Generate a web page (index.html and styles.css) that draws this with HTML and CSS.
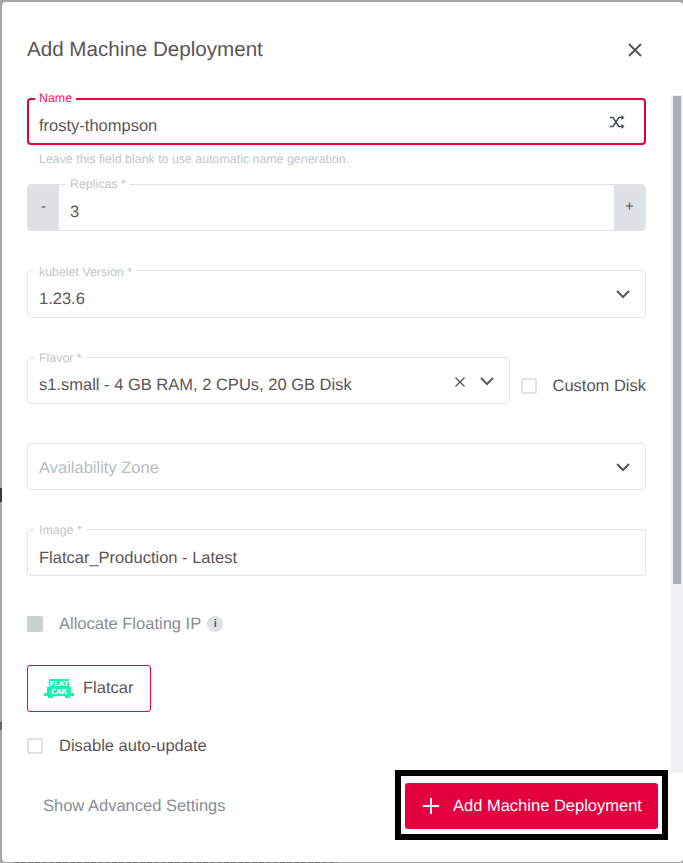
FILE: index.html
```html
<!DOCTYPE html>
<html lang="en">

<head>
    <meta charset="UTF-8">
    <title>Add Machine Deployment</title>
    <link rel="stylesheet" href="styles.css">
</head>

<body>
    <div class="dialog">
        <div class="header">
            <h1>Add Machine Deployment</h1>
            <svg class="close" width="16" height="16" viewBox="0 0 16 16">
                <path d="M2 2L14 14M14 2L2 14" stroke="#5b5557" stroke-width="2" fill="none" />
            </svg>
        </div>

        <div class="scrollbar">
            <div class="thumb"></div>
        </div>

        <div class="form">
            <div class="field active">
                <span class="label">Name</span>
                <span class="value">frosty-thompson</span>
                <svg class="shuffle" width="16" height="16" viewBox="0 0 18 18">
                    <path d="M1 4H4.5L11 14H15M1 14H4.5L11 4H15" stroke="#45525c" stroke-width="1.7" fill="none" />
                    <path d="M14 1L17.5 4L14 7ZM14 11L17.5 14L14 17Z" fill="#45525c" />
                </svg>
            </div>
            <div class="hint">Leave this field blank to use automatic name generation.</div>

            <div class="field replicas">
                <span class="step">-</span>
                <span class="label">Replicas *</span>
                <span class="value">3</span>
                <span class="step plus">+</span>
            </div>

            <div class="field gap tall">
                <span class="label">kubelet Version *</span>
                <span class="value">1.23.6</span>
                <svg class="chevron" width="16" height="10" viewBox="0 0 16 10">
                    <path d="M2 2L8 8L14 2" stroke="#5b5557" stroke-width="2" fill="none" />
                </svg>
            </div>

            <div class="flavor-row">
                <div class="field flavor">
                    <span class="label">Flavor *</span>
                    <span class="value">s1.small - 4 GB RAM, 2 CPUs, 20 GB Disk</span>
                    <svg class="clear" width="12" height="12" viewBox="0 0 12 12">
                        <path d="M1.5 1.5L10.5 10.5M10.5 1.5L1.5 10.5" stroke="#5b5557" stroke-width="1.4" fill="none" />
                    </svg>
                    <svg class="chevron" width="16" height="10" viewBox="0 0 16 10">
                        <path d="M2 2L8 8L14 2" stroke="#5b5557" stroke-width="2" fill="none" />
                    </svg>
                </div>
                <div class="check-wrap">
                    <span class="checkbox"></span>
                    <span class="check-text">Custom Disk</span>
                </div>
            </div>

            <div class="field gap">
                <span class="value placeholder">Availability Zone</span>
                <svg class="chevron" width="16" height="10" viewBox="0 0 16 10">
                    <path d="M2 2L8 8L14 2" stroke="#5b5557" stroke-width="2" fill="none" />
                </svg>
            </div>

            <div class="field gap image">
                <span class="label">Image *</span>
                <span class="value">Flatcar_Production - Latest</span>
            </div>

            <div class="check-row floating">
                <span class="checkbox checked"></span>
                <span class="check-text muted">Allocate Floating IP</span>
                <span class="info">i</span>
            </div>

            <div class="os-button">
                <svg class="logo" width="30" height="20" viewBox="0 0 30 20">
                    <rect x="5" y="0" width="20" height="8" fill="#1af2b0" />
                    <rect x="3" y="8" width="24" height="8" fill="#1af2b0" />
                    <rect x="0" y="14" width="30" height="3" fill="#1af2b0" />
                    <rect x="4" y="17" width="5" height="2" fill="#1af2b0" />
                    <rect x="21" y="17" width="5" height="2" fill="#1af2b0" />
                    <text x="15" y="6.5" class="logo-text">FLAT</text>
                    <text x="15" y="14.5" class="logo-text">CAR</text>
                </svg>
                <span>Flatcar</span>
            </div>

            <div class="check-row update">
                <span class="checkbox"></span>
                <span class="check-text">Disable auto-update</span>
            </div>
        </div>

        <div class="footer">
            <span class="advanced">Show Advanced Settings</span>
            <div class="highlight">
                <div class="submit">
                    <svg width="18" height="18" viewBox="0 0 18 18">
                        <path d="M9 1V17M1 9H17" stroke="#fff" stroke-width="2" fill="none" />
                    </svg>
                    <span>Add Machine Deployment</span>
                </div>
            </div>
        </div>
    </div>
</body>

</html>
```

FILE: styles.css
```css
body {
    margin: 0;
    height: 863px;
    overflow: hidden;
    background-color: #a5a5a5;
    /* bits of the page behind the dialog */
    background-image:
        repeating-linear-gradient(90deg, #777 0 5px, #a5a5a5 5px 7px),
        linear-gradient(#3a3a3a, #3a3a3a),
        linear-gradient(#666, #666);
    background-size: 323px 1px, 2px 14px, 2px 8px;
    background-position: 14px 862px, 0 488px, 0 722px;
    background-repeat: no-repeat;
    font-family: "Liberation Sans", Arial, sans-serif;
    text-rendering: geometricPrecision;
    color: #5b5557;
}

.dialog {
    position: relative;
    box-sizing: border-box;
    width: 681px;
    height: 860px;
    margin: 2px 0 0 2px;
    padding-left: 25px;
    background: #fff;
    border-radius: 4px;
}

.header {
    display: flex;
    justify-content: space-between;
    align-items: center;
    box-sizing: border-box;
    width: 619px;
    height: 93px;
    padding-top: 3px;
}

.header h1 {
    margin: 0;
    font-size: 20.6px;
    font-weight: 400;
    line-height: 24px;
}

.close {
    margin: 0 3px 0 0;
}

.scrollbar {
    position: absolute;
    top: 93px;
    right: 0;
    width: 12px;
    height: 678px;
    background: #f0f1f2;
}

.thumb {
    width: 8px;
    height: 488px;
    margin: 1px 0 0 2px;
    background: #a8afba;
}

.form {
    width: 619px;
    padding-top: 3px;
}

.field {
    position: relative;
    display: flex;
    align-items: center;
    box-sizing: border-box;
    height: 47px;
    padding: 8px 11px 0;
    border: 1px solid #e0e3e6;
    border-radius: 4px;
    font-size: 16.5px;
}

.field.active {
    border: 2px solid #e4003e;
    padding: 8px 10px 0;
}

.field.tall {
    height: 48px;
}

.gap {
    margin-top: 39px;
}

.label {
    position: absolute;
    top: -8px;
    left: 7px;
    padding: 0 4px;
    background: #fff;
    font-size: 12.4px;
    line-height: 14px;
    color: #c3c5c8;
}

.active .label {
    top: -9px;
    left: 6px;
    color: #f5215b;
}

.flavor .label,
.image .label {
    top: -7px;
}

.tall .label {
    top: -6px;
}

.value {
    flex: 1;
    padding-top: 1px;
}

.tall .value,
.image .value {
    padding-top: 3px;
}

.placeholder {
    margin-top: -5px;
    color: #b9bdc1;
}

.shuffle {
    margin: -7px 9px 0 0;
}

.chevron {
    margin: -8px 3px 0 0;
}

.clear {
    margin: -5px 13px 0 0;
}

.hint {
    margin: 7px 0 18px 12px;
    font-size: 12.4px;
    line-height: 14px;
    color: #c3c5c8;
}

.replicas {
    padding: 0;
}

.replicas .value {
    padding: 9px 0 0 11px;
}

.replicas .label {
    left: 38px;
}

.step {
    display: flex;
    align-items: center;
    justify-content: center;
    box-sizing: border-box;
    width: 31px;
    height: 45px;
    padding-bottom: 3px;
    background: #dfe2e5;
    font-size: 15px;
    border-radius: 3px 0 0 3px;
}

.step.plus {
    border-radius: 0 3px 3px 0;
}

.flavor-row {
    display: flex;
    align-items: center;
    margin-top: 39px;
}

.flavor {
    width: 483px;
}

.check-wrap {
    display: flex;
    align-items: center;
    flex: 1;
    justify-content: space-between;
    margin-left: 11px;
    padding-top: 10px;
}

.check-row {
    display: flex;
    align-items: center;
}

.checkbox {
    flex: none;
    box-sizing: border-box;
    width: 16px;
    height: 16px;
    border: 2px solid #e0e3e6;
    border-radius: 2px;
    background: #fff;
}

.checkbox.checked {
    border: 0;
    background: #c9d2cb;
}

.check-text {
    font-size: 16.5px;
    line-height: 18px;
}

.check-row .check-text {
    margin-left: 16px;
}

.muted {
    color: #868e96;
}

.floating {
    margin-top: 40px;
    height: 16px;
}

.info {
    display: flex;
    align-items: center;
    justify-content: center;
    width: 16px;
    height: 16px;
    margin-left: 6px;
    border-radius: 50%;
    background: #dfe2e5;
    font-size: 11px;
    font-weight: 700;
    color: #5b5557;
}

.os-button {
    display: flex;
    align-items: center;
    box-sizing: border-box;
    width: 124px;
    height: 47px;
    margin-top: 33px;
    padding-left: 16px;
    border: 1px solid #e4003e;
    border-radius: 3px;
    font-size: 16.5px;
}

.os-button span {
    margin-left: 9px;
}

.logo-text {
    font-size: 7px;
    font-weight: 700;
    fill: #fff;
    text-anchor: middle;
    font-family: "DejaVu Sans", sans-serif;
}

.update {
    margin-top: 25px;
}

.footer {
    display: flex;
    align-items: center;
    justify-content: space-between;
    width: 641px;
    margin-top: 15px;
}

.advanced {
    margin: 2px 0 0 16px;
    font-size: 16.5px;
    color: #868e96;
}

.highlight {
    box-sizing: border-box;
    width: 273px;
    height: 70px;
    padding: 7px 4px 0;
    border: 6px solid #000;
}

.submit {
    display: flex;
    align-items: center;
    gap: 13px;
    box-sizing: border-box;
    height: 46px;
    padding-left: 17px;
    background: #e4003e;
    border-radius: 3px;
    color: #fff;
    font-size: 16.5px;
}
```
